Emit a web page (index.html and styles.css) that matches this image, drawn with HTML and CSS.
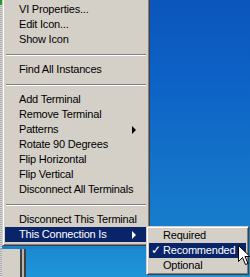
FILE: index.html
```html
<!DOCTYPE html>
<html>

<head>
    <title>Connector pane menu</title>
    <meta charset="utf-8">
    <link rel="stylesheet" href="styles.css">
</head>

<body>
    <div class="desk">
        <div class="edge"></div>
        <div class="corner"></div>

        <div class="win">
            <div class="win-stripe"></div>
            <div class="win-body"></div>
            <div class="win-line"></div>
            <div class="win-gap"></div>
            <div class="win-line"></div>
            <div class="win-view"></div>
        </div>

        <div class="menu main">
            <div class="item"><span></span><span>VI Properties...</span></div>
            <div class="item"><span></span><span>Edit Icon...</span></div>
            <div class="item"><span></span><span>Show Icon</span></div>
            <div class="sep"></div>
            <div class="item"><span></span><span>Find All Instances</span></div>
            <div class="sep"></div>
            <div class="item"><span></span><span>Add Terminal</span></div>
            <div class="item"><span></span><span>Remove Terminal</span></div>
            <div class="item"><span></span><span>Patterns</span><span class="arrow"></span></div>
            <div class="item"><span></span><span>Rotate 90 Degrees</span></div>
            <div class="item"><span></span><span>Flip Horizontal</span></div>
            <div class="item"><span></span><span>Flip Vertical</span></div>
            <div class="item"><span></span><span>Disconnect All Terminals</span></div>
            <div class="sep"></div>
            <div class="item"><span></span><span>Disconnect This Terminal</span></div>
            <div class="item hot"><span></span><span>This Connection Is</span><span class="arrow"></span></div>
        </div>

        <div class="menu sub">
            <div class="item"><span></span><span>Required</span></div>
            <div class="item hot"><span class="check">✓</span><span>Recommended</span></div>
            <div class="item"><span></span><span>Optional</span></div>
        </div>

        <svg class="cursor" width="13" height="21" viewBox="0 0 13 21">
            <path d="M0.5 0.5 L0.5 16.5 L4.5 12.5 L7.5 19.5 L10 18.5 L7 11.5 L12 11.5 Z" fill="#fff" stroke="#000" stroke-width="1"/>
        </svg>
    </div>
</body>

</html>
```

FILE: styles.css
```css
body {
    margin: 0;
    font-family: "Liberation Sans", Arial, sans-serif;
    font-size: 11px;
}

.desk {
    position: relative;
    width: 250px;
    height: 277px;
    overflow: hidden;
    background: linear-gradient(180deg, #0b55bd 0px, #0d62c6 80px, #1575c9 180px, #1a86cf 277px);
}

.edge {
    position: absolute;
    left: 0;
    top: 0;
    width: 2px;
    height: 277px;
    background: repeating-linear-gradient(180deg, #a8a8a8 0px, #a8a8a8 1px, #d8d8d8 1px, #d8d8d8 2px);
}

.corner {
    position: absolute;
    left: 0;
    top: 0;
    width: 4px;
    height: 5px;
    background: #1f9a2a;
}

/* window peeking out under the menu */
.win {
    position: absolute;
    left: 0;
    top: 249px;
    width: 250px;
    height: 28px;
    display: flex;
}

.win-stripe {
    width: 2px;
    background: repeating-linear-gradient(180deg, #a8a8a8 0px, #a8a8a8 1px, #d8d8d8 1px, #d8d8d8 2px);
}

.win-body {
    width: 18px;
    background: #d4d0c8;
}

.win-line {
    width: 2px;
    background: #404040;
}

.win-gap {
    width: 2px;
    background: #b8b4ac;
}

.win-view {
    flex: 1;
    background: linear-gradient(180deg, #1b8ad0, #1f95d8);
}

/* menus */
.menu {
    position: absolute;
    box-sizing: border-box;
    background: #d4d0c8;
    border: 1px solid;
    border-color: #d4d0c8 #404040 #404040 #d4d0c8;
    box-shadow: inset 1px 1px #fff, inset -1px -1px #808080;
    color: #000;
    letter-spacing: -0.2px;
}

.main {
    left: 2px;
    top: -2px;
    width: 148px;
    padding: 3px 2px;
}

.sub {
    left: 146px;
    top: 226px;
    width: 103px;
    padding: 1px 2px;
}

.item {
    display: grid;
    grid-template-columns: 14px 1fr 15px;
    align-items: center;
    height: 15px;
    line-height: 15px;
    white-space: nowrap;
}

.item.hot {
    background: #0a246a;
    color: #fff;
}

.check {
    font-size: 12px;
    padding-left: 2px;
}

.arrow {
    width: 0;
    height: 0;
    border-top: 4px solid transparent;
    border-bottom: 4px solid transparent;
    border-left: 4px solid #000;
}

.hot .arrow {
    border-left-color: #fff;
}

.sep {
    height: 15px;
    display: flex;
    align-items: center;
    padding: 0 1px;
}

.sep::after {
    content: "";
    flex: 1;
    border-top: 1px solid #808080;
    border-bottom: 1px solid #fff;
}

.cursor {
    position: absolute;
    left: 238px;
    top: 245px;
}
```
